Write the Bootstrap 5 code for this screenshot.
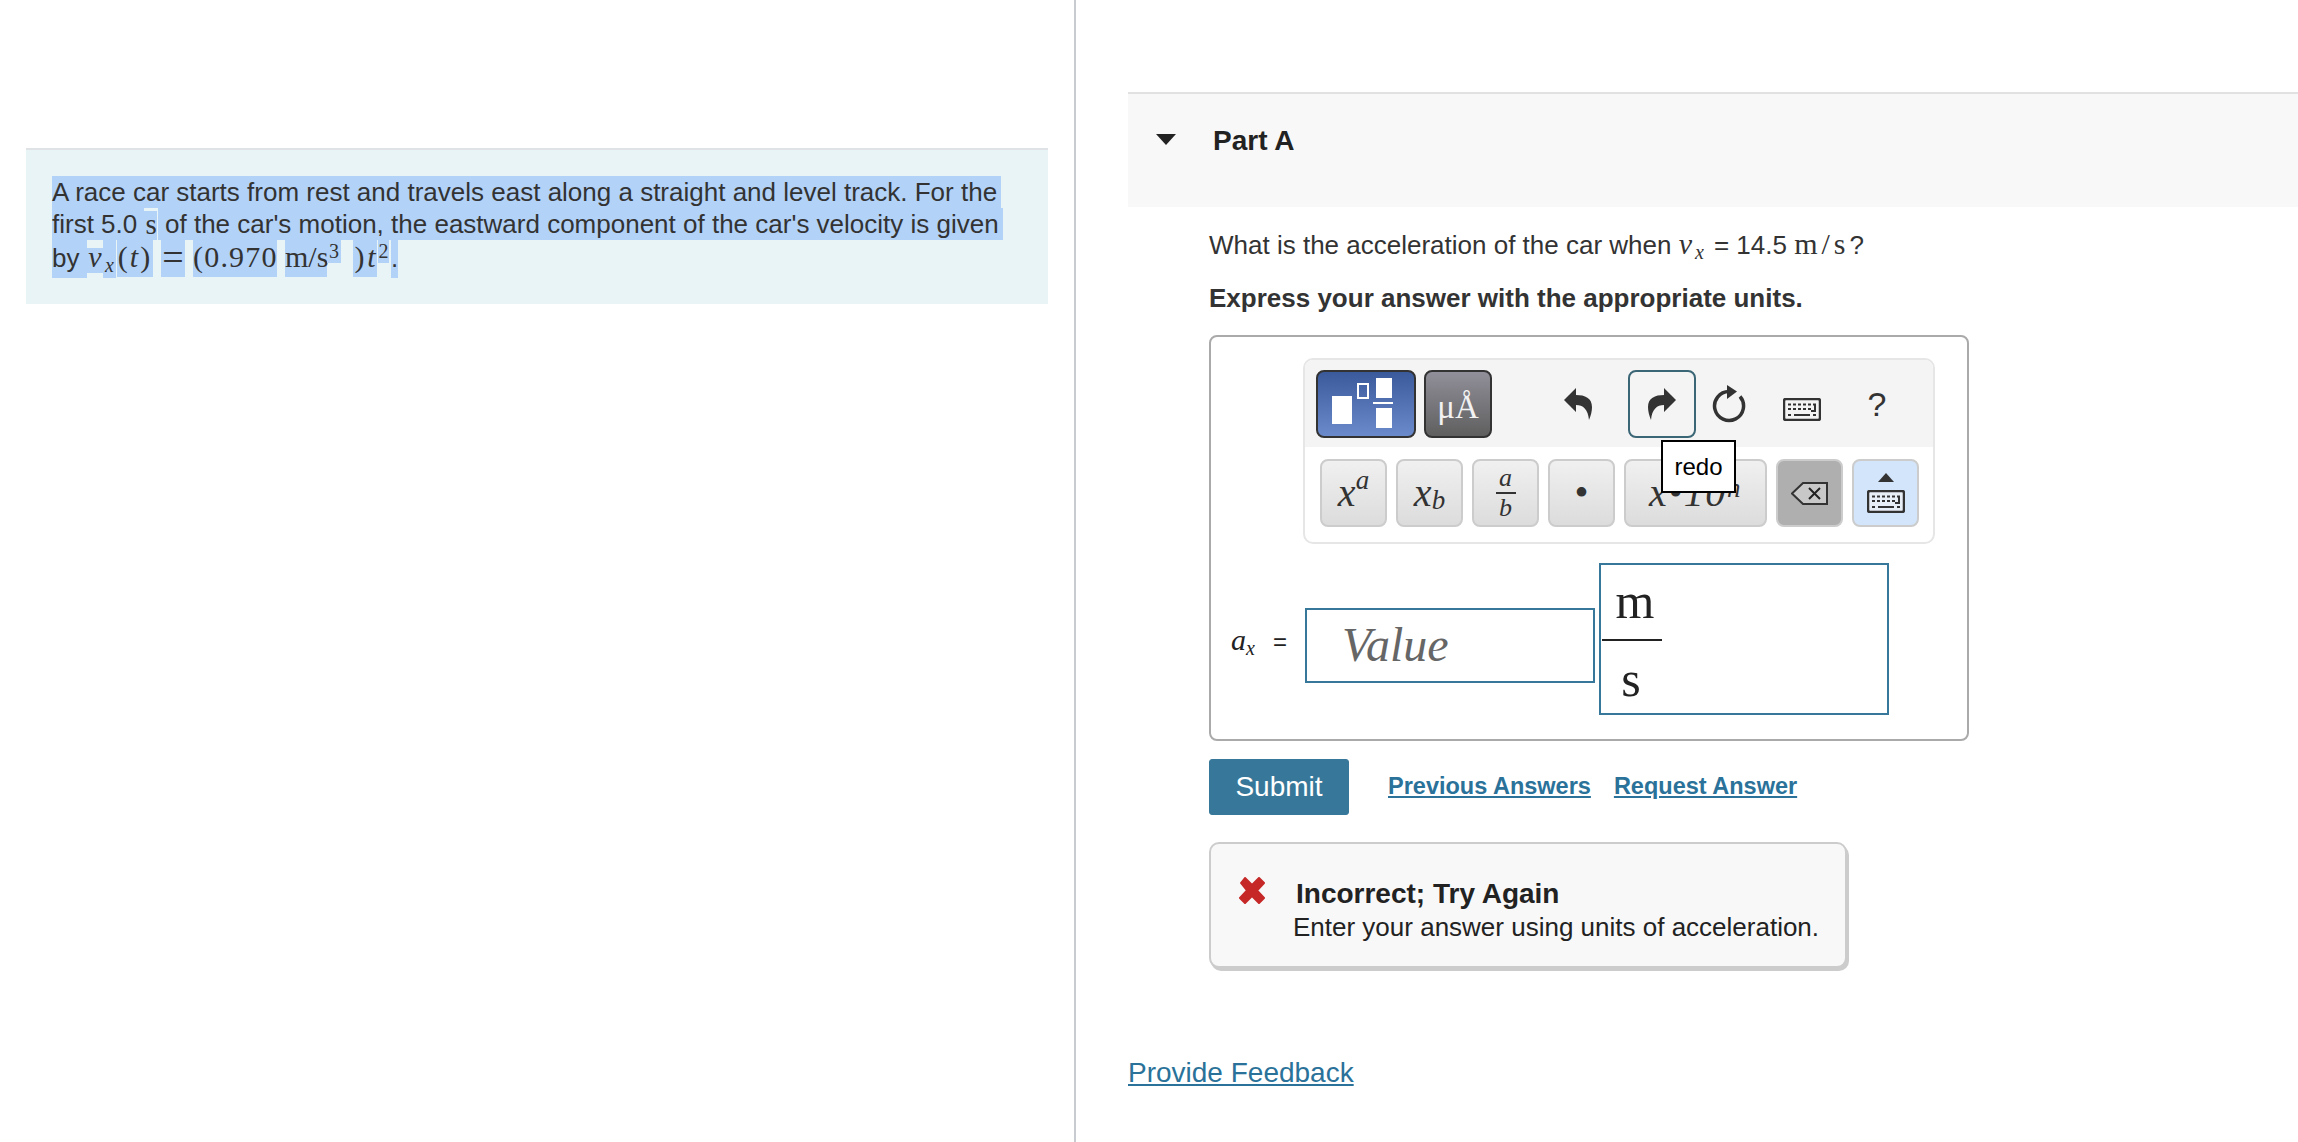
<!DOCTYPE html>
<html lang="en">
  <head>
    <meta charset="UTF-8" />
    <title>Part A</title>
    <link
      rel="stylesheet"
      href="https://cdn.jsdelivr.net/npm/bootstrap@5.3.1/dist/css/bootstrap.min.css"
    />
    <style>
      html, body { height: 100%; overflow: hidden; }
      body { font-family: "Liberation Sans", Arial, sans-serif; font-size: 26px; color: #333; background: #fff; }
      .serif { font-family: "Liberation Serif", "Times New Roman", serif; }
      .ital { font-family: "Liberation Serif", "Times New Roman", serif; font-style: italic; }

      .leftPane { width: 1076px; height: 1142px; flex: none; border-right: 2px solid #c8ccd0; padding: 148px 26px 0 26px; }
      .introPanel { height: 156px; background: #e9f4f7; border-top: 2px solid #dfe3e6; padding: 26px 0 0 26px; }
      .selLine { display: block; width: fit-content; height: 32px; line-height: 32px; background: #b2d2f8; white-space: nowrap; padding-right: 4px; }
      .sNotch { box-shadow: inset -1px 3px 0 #e9f4f7; display: inline-block; height: 32px; font-size: 29px; padding: 0 1px; vertical-align: top; line-height: 32px; }

      /* third line: the selection breaks up around each math piece */
      .mathRow { display: flex; align-items: flex-start; margin-top: -4px; font-size: 30px; color: #333; }
      .mp { display: block; flex: none; background: #b2d2f8; height: 41px; line-height: 42px; text-align: center; white-space: nowrap; }
      .mpBy { width: 35px; height: 38px; margin-top: 4px; line-height: 36px; font-family: "Liberation Sans", sans-serif; font-size: 26px; text-align: left; }
      .mpV { width: 16px; height: 25px; margin-top: 12px; line-height: 18px; }
      .mpSub { width: 13px; height: 42px; font-size: 20px; line-height: 59px; }
      .mpParen { width: 36px; margin-left: 1px; letter-spacing: 2px; }
      .mpEq { width: 24px; margin-left: 8px; font-size: 38px; line-height: 42px; }
      .mpNum { width: 84px; margin-left: 8px; letter-spacing: 1.2px; }
      .mpUnit { width: 42px; margin-left: 8px; }
      .mpCube { width: 14px; height: 27px; font-size: 20px; line-height: 31px; }
      .mpClose { width: 13px; margin-left: 12px; }
      .mpT { width: 11px; }
      .mpSq { width: 11px; height: 27px; margin-left: 1px; font-size: 20px; line-height: 31px; }
      .mpDot { width: 7px; height: 38px; margin: 4px 0 0 2px; line-height: 36px; font-family: "Liberation Sans", sans-serif; font-size: 26px; }

      .rightPane { flex: 1; min-width: 0; padding: 92px 0 0 52px; }
      .partHead { height: 115px; background: #f8f8f8; border-top: 2px solid #e2e2e2; padding: 26px 0 0 28px; color: #222; }
      .partHead b { font-size: 28px; margin-left: 37px; }
      .caretDown { width: 20px; height: 11px; flex: none; margin-top: 14px; }
      .partBody { padding: 22px 0 0 81px; }
      .questionLine { height: 39px; line-height: 30px; margin: 0; white-space: nowrap; }
      .qV { font-size: 30px; }
      .qX { font-size: 20px; position: relative; top: 5px; margin-left: 3px; margin-right: 10px; }
      .qUnit { font-size: 30px; letter-spacing: 4px; }
      .expressLine { margin: 15px 0 0; font-weight: 700; line-height: 30px; }

      .answerBox { width: 760px; height: 406px; margin-top: 22px; border: 2px solid #aaa; border-radius: 8px; padding: 21px 0 0 92px; position: relative; }
      .toolBox { width: 632px; height: 186px; border: 2px solid #e6e6e6; border-radius: 10px; overflow: hidden; }
      .toolTop { height: 87px; background: #f4f4f4; padding: 10px 0 0 11px; }
      .toolLow { padding: 12px 0 0 15px; gap: 9px; }
      .tplBtn { width: 100px; height: 68px; border: 2px solid #333; border-radius: 8px; background: linear-gradient(#3a5a9b, #6a8acb); }
      .symBtn { width: 68px; height: 68px; margin-left: 8px; border: 2px solid #333; border-radius: 8px; background: linear-gradient(#918f99, #5f5f5f); color: #f2f2f2; font-size: 33px; padding-top: 8px; }
      .plainIcon { width: 68px; height: 68px; }
      .undoSlot { margin-left: 52px; }
      .redoBtn { border: 2px solid #3a6675; border-radius: 8px; margin-left: 16px; }
      .reloadSlot { width: 66px; }
      .kbdSlot { width: 80px; margin-top: 5px; }
      .helpSlot { width: 70px; font-size: 34px; margin-left: 0; }
      .mathBtn { width: 67px; height: 68px; border: 2px solid #ccc; border-radius: 8px; background: linear-gradient(#f0f0f0, #dcdcdc); color: #333; font-size: 40px; line-height: 1; }
      .mathBtn sup, .mathBtn sub { font-size: 27px; }
      .mathBtn.wideBtn { width: 143px; white-space: nowrap; letter-spacing: 1.5px; }
      .mathBtn.wideBtn sup { top: -.2em; }
      .mathBtn.delBtn { background: #afafaf; }
      .mathBtn.kbdBtn { background: #d3e5fb; }
      .fracBtn { font-size: 26px; line-height: 28px; }
      .fracBtn i { display: block; text-align: center; width: 20px; }
      .fracBtn i:first-child { border-bottom: 2px solid #333; }
      .redoTip { position: absolute; left: 450px; top: 103px; width: 75px; height: 53px; background: #fff; border: 2px solid #000; color: #000; font-size: 24px; }

      .answerRow { margin: 19px 0 0 -72px; }
      .varLabel { width: 74px; font-size: 30px; color: #222; white-space: nowrap; margin-top: 57px; line-height: 40px; }
      .varLabel sub { font-size: 20px; }
      .varLabel span { font-family: "Liberation Sans", sans-serif; font-style: normal; font-size: 24px; margin-left: 18px; }
      .valueField { width: 290px; height: 75px; margin-top: 45px; border: 2px solid #37789a; padding-left: 35px; font-size: 48px; line-height: 70px; color: #666; }
      .unitField { width: 290px; height: 152px; margin-left: 4px; border: 2px solid #37789a; color: #222; font-size: 50px; }
      .unitFrac { width: 60px; margin-left: 1px; text-align: center; }
      .unitTop { height: 76px; line-height: 72px; border-bottom: 2px solid #222; padding-left: 6px; }
      .unitBot { height: 72px; line-height: 76px; padding-right: 2px; }

      .submitRow { margin-top: 18px; }
      .submitBtn { --bs-btn-bg: #37789a; --bs-btn-hover-bg: #37789a; --bs-btn-color: #fff; --bs-btn-border-color: #37789a; --bs-btn-border-radius: 3px; width: 140px; height: 56px; padding: 0; font-size: 28px; }
      .boldLink { color: #2a7299; font-weight: 700; font-size: 23.5px; margin-right: 23px; margin-top: -1px; }
      .submitRow a:first-of-type { margin-left: 39px; }

      .feedbackBox { width: 638px; height: 126px; margin-top: 27px; background: #f8f8f8; border: 2px solid #ccc; border-radius: 10px; box-shadow: 2px 3px 0 #ccc; padding: 33px 0 0 27px; color: #222; }
      .feedbackBox svg { width: 28px; height: 27px; flex: none; }
      .feedbackBox b { display: block; margin-left: 30px; font-size: 28px; line-height: 32px; margin-top: 1px; }
      .feedbackBox p { margin: 1px 0 0 27px; line-height: 32px; }
      .provideLink { display: inline-block; margin: 84px 0 0 0; color: #2a7299; font-size: 28px; }
    </style>
  </head>
  <body>
    <div class="d-flex">
      <div class="leftPane">
        <div class="introPanel">
          <span class="selLine">A race car starts from rest and travels east along a straight and level track. For the</span>
          <span class="selLine">first 5.0 <span class="sNotch serif">s</span> of the car's motion, the eastward component of the car's velocity is given</span>
          <div class="mathRow serif">
            <span class="mp mpBy">by</span>
            <span class="mp mpV ital">v</span>
            <span class="mp mpSub ital">x</span>
            <span class="mp mpParen">(<i>t</i>)</span>
            <span class="mp mpEq">=</span>
            <span class="mp mpNum">(0.970</span>
            <span class="mp mpUnit">m/s</span>
            <span class="mp mpCube">3</span>
            <span class="mp mpClose">)</span>
            <span class="mp mpT ital">t</span>
            <span class="mp mpSq">2</span>
            <span class="mp mpDot">.</span>
          </div>
        </div>
      </div>

      <div class="rightPane">
        <div class="partHead d-flex">
          <svg class="caretDown" viewBox="0 0 20 11"><path d="M0 0H20L10 11Z" fill="#222" /></svg>
          <b>Part A</b>
        </div>

        <div class="partBody">
          <p class="questionLine">What is the acceleration of the car when <span class="ital qV">v</span><span class="ital qX">x</span>= 14.5 <span class="serif qUnit">m/s</span>?</p>
          <p class="expressLine">Express your answer with the appropriate units.</p>

          <div class="answerBox">
            <div class="toolBox">
              <div class="toolTop d-flex">
                <div class="tplBtn">
                  <svg width="96" height="64" viewBox="0 0 96 64">
                    <rect x="14" y="24" width="20" height="28" fill="#fff" />
                    <rect x="40" y="12" width="10" height="14" fill="none" stroke="#fff" stroke-width="2" />
                    <rect x="58" y="6" width="16" height="20" fill="#fff" />
                    <rect x="55" y="30" width="20" height="2" fill="#fff" />
                    <rect x="58" y="36" width="16" height="20" fill="#fff" />
                  </svg>
                </div>
                <div class="symBtn serif d-flex align-items-center justify-content-center">μÅ</div>
                <div class="plainIcon undoSlot d-flex align-items-center justify-content-center">
                  <svg width="28" height="32" viewBox="0 0 28 32"><path d="M12 0 0 12 12 24V17C19 17 24 21 25 32 27 27 28 23 28 19 28 10 21 7 12 7Z" fill="#333" /></svg>
                </div>
                <div class="plainIcon redoBtn d-flex align-items-center justify-content-center">
                  <svg width="28" height="32" viewBox="0 0 28 32"><path d="M16 0 28 12 16 24V17C9 17 4 21 3 32 1 27 0 23 0 19 0 10 7 7 16 7Z" fill="#333" /></svg>
                </div>
                <div class="plainIcon reloadSlot d-flex align-items-center justify-content-center">
                  <svg width="34" height="38" viewBox="0 0 34 38"><path d="M17 6.500A14.500 14.500 0 1 0 28 11.500" fill="none" stroke="#333" stroke-width="3.500" /><path d="M15 0 25 6.500 15 14Z" fill="#333" /></svg>
                </div>
                <div class="plainIcon kbdSlot d-flex align-items-center justify-content-center">
                  <svg width="38" height="23" viewBox="0 0 38 23">
                    <rect x="1" y="1" width="36" height="21" rx="2" fill="#f4f4f4" stroke="#333" stroke-width="2.500" />
                    <path d="M5 6.500H33M5 11H28" stroke="#333" stroke-width="2" stroke-dasharray="3 2" />
                    <path d="M32 6V13H28M11 17H27" fill="none" stroke="#333" stroke-width="2" />
                    <path d="M5 17H8M30 17H33" stroke="#333" stroke-width="2" />
                  </svg>
                </div>
                <div class="plainIcon helpSlot d-flex align-items-center justify-content-center">?</div>
              </div>
              <div class="toolLow d-flex">
                <div class="mathBtn ital d-flex align-items-center justify-content-center">x<sup>a</sup></div>
                <div class="mathBtn ital d-flex align-items-center justify-content-center">x<sub>b</sub></div>
                <div class="mathBtn ital fracBtn d-flex flex-column align-items-center justify-content-center"><i>a</i><i>b</i></div>
                <div class="mathBtn serif d-flex align-items-center justify-content-center">•</div>
                <div class="mathBtn wideBtn ital d-flex align-items-center justify-content-center">x•10<sup>n</sup></div>
                <div class="mathBtn delBtn d-flex align-items-center justify-content-center">
                  <svg width="38" height="23" viewBox="0 0 38 23"><path d="M1 11.500 12 1H36V22H12Z" fill="#c8c8c8" stroke="#333" stroke-width="2" /><path d="M18 6 29 17M29 6 18 17" stroke="#222" stroke-width="2" /></svg>
                </div>
                <div class="mathBtn kbdBtn d-flex flex-column align-items-center justify-content-center gap-2">
                  <svg width="16" height="9" viewBox="0 0 16 9"><path d="M8 0 16 9H0Z" fill="#333" /></svg>
                  <svg width="38" height="23" viewBox="0 0 38 23">
                    <rect x="1" y="1" width="36" height="21" rx="2" fill="#e8eef6" stroke="#333" stroke-width="2.500" />
                    <path d="M5 6.500H33M5 11H28" stroke="#333" stroke-width="2" stroke-dasharray="3 2" />
                    <path d="M32 6V13H28M11 17H27" fill="none" stroke="#333" stroke-width="2" />
                    <path d="M5 17H8M30 17H33" stroke="#333" stroke-width="2" />
                  </svg>
                </div>
              </div>
            </div>

            <div class="redoTip d-flex align-items-center justify-content-center">redo</div>

            <div class="answerRow d-flex">
              <div class="varLabel ital">a<sub>x</sub><span>=</span></div>
              <div class="valueField ital">Value</div>
              <div class="unitField serif">
                <div class="unitFrac">
                  <div class="unitTop">m</div>
                  <div class="unitBot">s</div>
                </div>
              </div>
            </div>
          </div>

          <div class="submitRow d-flex align-items-center">
            <button type="button" class="btn submitBtn">Submit</button>
            <a href="#" class="boldLink">Previous Answers</a>
            <a href="#" class="boldLink">Request Answer</a>
          </div>

          <div class="feedbackBox d-flex">
            <svg viewBox="0 0 28 27"><path d="M3 6 7 1 14 8 21 1 26 6 19 13.500 26 21 21 26 14 19 7 26 2 21 9 13.500Z" fill="#c62828" stroke="#c62828" stroke-linejoin="round" stroke-width="2" /></svg>
            <div>
              <b>Incorrect; Try Again</b>
              <p>Enter your answer using units of acceleration.</p>
            </div>
          </div>
        </div>

        <a href="#" class="provideLink">Provide Feedback</a>
      </div>
    </div>

    <script src="https://cdn.jsdelivr.net/npm/bootstrap@5.3.1/dist/js/bootstrap.bundle.min.js"></script>
  </body>
</html>
